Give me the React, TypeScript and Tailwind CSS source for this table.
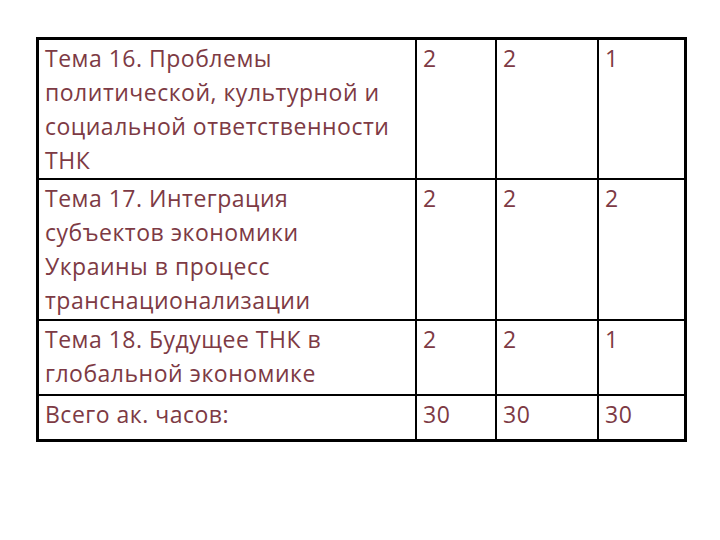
export default function App() {
  const rows: { lines: string[]; nums: string[] }[] = [
    {
      lines: ["Тема 16. Проблемы", "политической, культурной и", "социальной ответственности", "ТНК"],
      nums: ["2", "2", "1"],
    },
    {
      lines: ["Тема 17. Интеграция", "субъектов экономики", "Украины в процесс", "транснационализации"],
      nums: ["2", "2", "2"],
    },
    {
      lines: ["Тема 18. Будущее ТНК в", "глобальной экономике"],
      nums: ["2", "2", "1"],
    },
    {
      lines: ["Всего ак. часов:"],
      nums: ["30", "30", "30"],
    },
  ]

  return (
    <div className="w-[720px] h-[540px] bg-white pt-[37px] pl-[36px] font-['Open_Sans',sans-serif] text-[23px] tracking-[0.5px] leading-[34px] text-[#7d3a44]">
      <div className="grid w-fit grid-cols-[378px_80px_102px_85px] grid-rows-[140px_141px_75px_43px] border-[3px] border-black">
        {rows.map((row, i) => {
          const last = i === rows.length - 1
          return [
            <div key={`t${i}`} className={`pl-[6px] pt-[1px] border-r-2 border-black ${last ? "" : "border-b-2"}`}>
              {row.lines.map((l) => (
                <div key={l} className="whitespace-nowrap">{l}</div>
              ))}
            </div>,
            ...row.nums.map((n, j) => (
              <div
                key={`n${i}${j}`}
                className={`pl-[6px] pt-[1px] border-black ${j < 2 ? "border-r-2" : ""} ${last ? "" : "border-b-2"}`}
              >
                {n}
              </div>
            )),
          ]
        })}
      </div>
    </div>
  )
}
